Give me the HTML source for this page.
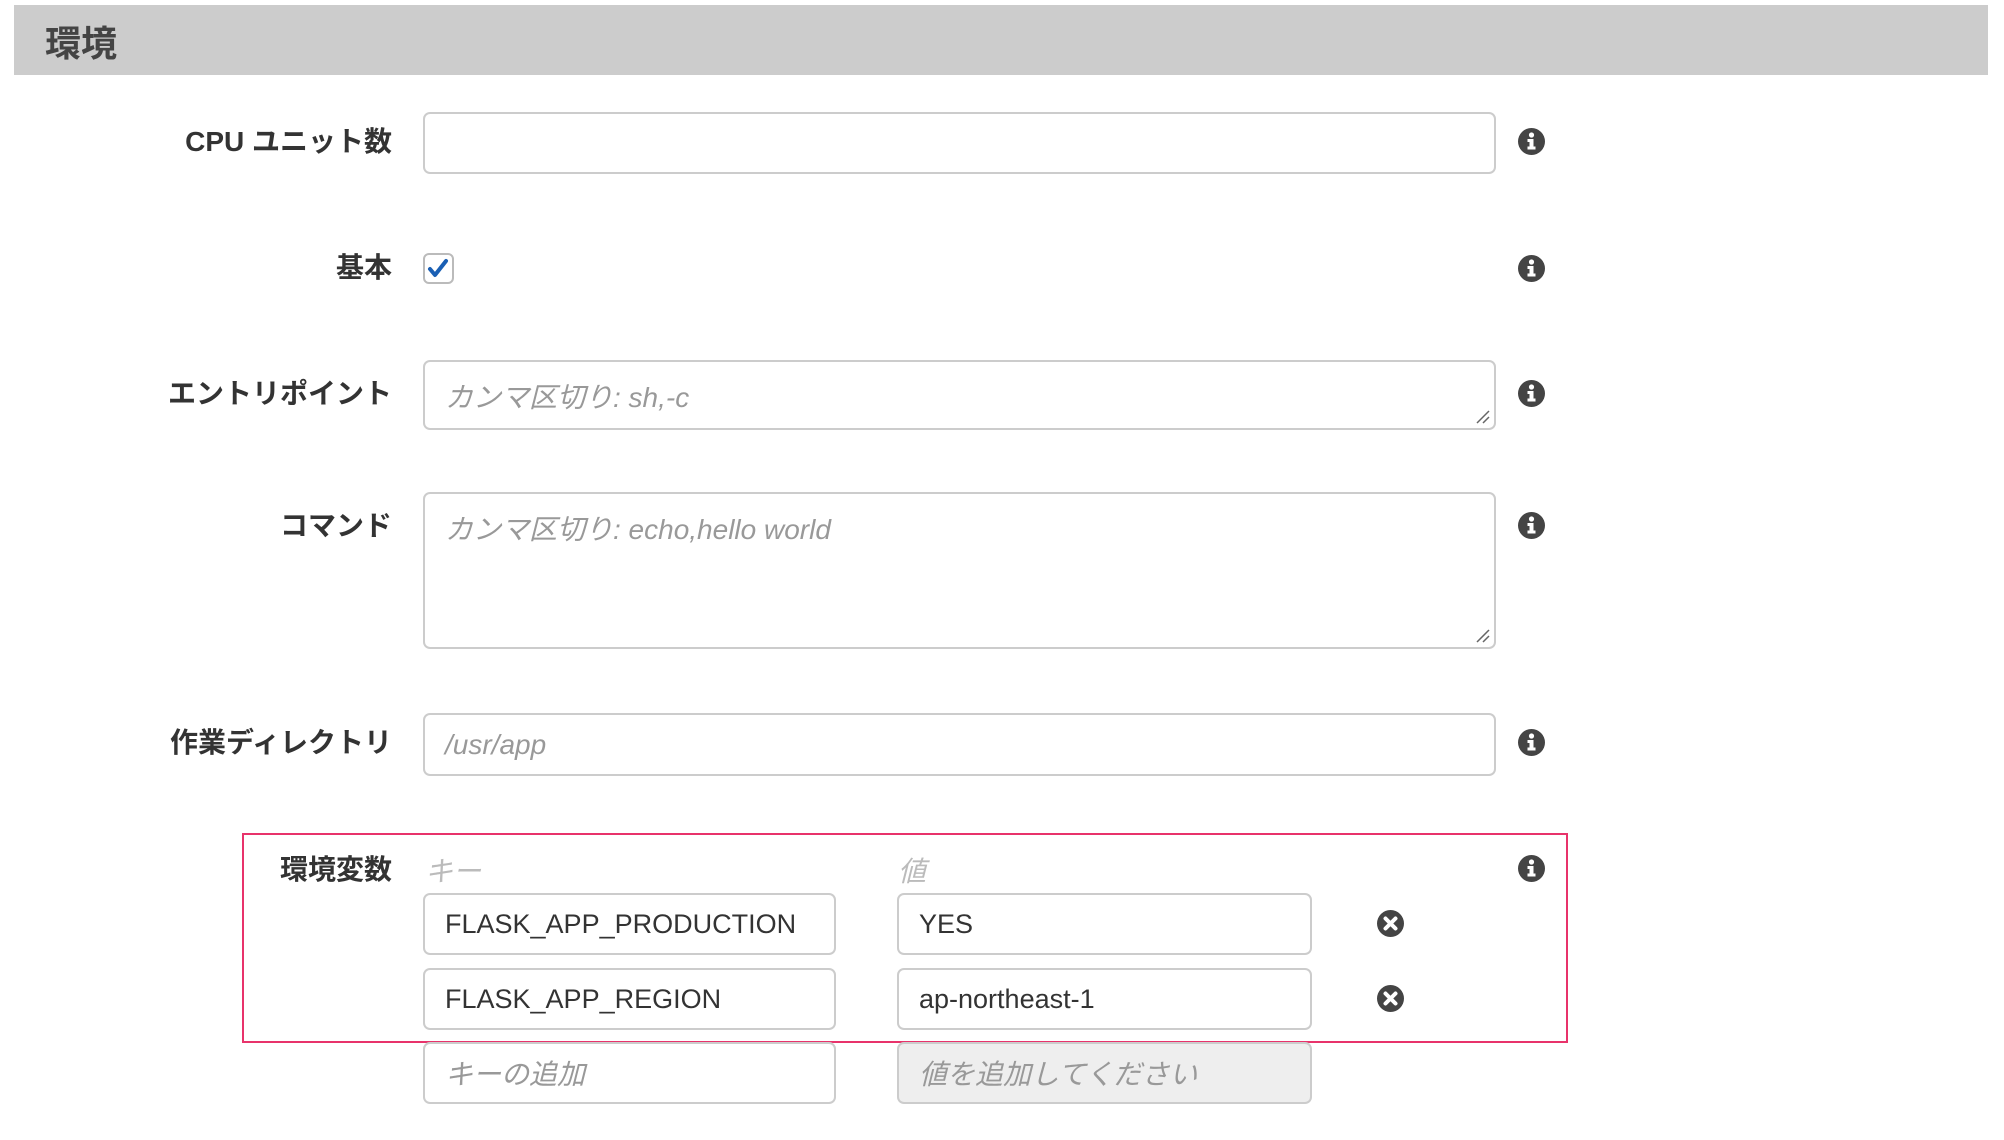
<!DOCTYPE html>
<html><head><meta charset="utf-8"><style>
body{margin:0;width:2004px;height:1140px;background:#fff;position:relative;overflow:hidden;font-family:"Liberation Sans","Noto Sans CJK JP",sans-serif;}
.a{position:absolute}
.hdr{left:14px;top:5px;width:1974px;height:70px;background:#cccccc}
.hdr span{position:absolute;left:31px;top:10px;font-size:36px;font-weight:bold;color:#444}
.lbl{position:absolute;right:1612px;font-size:28px;font-weight:bold;color:#333;white-space:nowrap;line-height:30px}
.inp{position:absolute;border:2px solid #ccc;border-radius:7px;box-sizing:border-box;background:#fff;font-size:27px;color:#333;padding-left:20px;display:flex;align-items:center}
.ph{color:#999;font-style:italic;font-size:28px}
.ta{align-items:flex-start}
.info{position:absolute;width:27px;height:27px}
.grip{position:absolute;right:4px;bottom:4px;width:14px;height:14px}
</style></head><body>
<div class="a hdr"><span>環境</span></div>

<div class="lbl" style="top:127px">CPU ユニット数</div>
<div class="inp" style="left:423px;top:112px;width:1073px;height:62px"></div>

<div class="lbl" style="top:253px">基本</div>
<div class="a" style="left:423px;top:253px;width:31px;height:31px;border:2px solid #bbb;border-radius:6px;box-sizing:border-box;background:#fff">
<svg width="27" height="27" viewBox="0 0 27 27" style="position:absolute;left:0;top:0"><path d="M5 14 L10 20 L21 6" stroke="#1a5fb4" stroke-width="4" fill="none" stroke-linecap="round" stroke-linejoin="round"/></svg></div>

<div class="lbl" style="top:379px">エントリポイント</div>
<div class="inp ta" style="left:423px;top:360px;width:1073px;height:70px;padding-top:14px"><span class="ph">カンマ区切り: sh,-c</span>
<svg class="grip" viewBox="0 0 14 14"><path d="M1 13 L13 1 M7 13 L13 7" stroke="#666" stroke-width="1.5"/></svg></div>

<div class="lbl" style="top:511px">コマンド</div>
<div class="inp ta" style="left:423px;top:492px;width:1073px;height:157px;padding-top:14px"><span class="ph">カンマ区切り: echo,hello world</span>
<svg class="grip" viewBox="0 0 14 14"><path d="M1 13 L13 1 M7 13 L13 7" stroke="#666" stroke-width="1.5"/></svg></div>

<div class="lbl" style="top:728px">作業ディレクトリ</div>
<div class="inp" style="left:423px;top:713px;width:1073px;height:63px"><span class="ph">/usr/app</span></div>

<div class="a" style="left:242px;top:833px;width:1326px;height:210px;border:2px solid #e8336b;box-sizing:border-box"></div>
<div class="lbl" style="top:855px">環境変数</div>
<div class="a ph" style="left:425px;top:850px;color:#bbb">キー</div>
<div class="a ph" style="left:898px;top:850px;color:#bbb">値</div>

<div class="inp" style="left:423px;top:893px;width:413px;height:62px">FLASK_APP_PRODUCTION</div>
<div class="inp" style="left:897px;top:893px;width:415px;height:62px">YES</div>
<div class="inp" style="left:423px;top:968px;width:413px;height:62px">FLASK_APP_REGION</div>
<div class="inp" style="left:897px;top:968px;width:415px;height:62px">ap-northeast-1</div>
<div class="inp" style="left:423px;top:1042px;width:413px;height:62px"><span class="ph">キーの追加</span></div>
<div class="inp" style="left:897px;top:1042px;width:415px;height:62px;background:#eee"><span class="ph">値を追加してください</span></div>

<svg width="0" height="0" style="position:absolute"><defs>
<g id="i"><circle cx="13.5" cy="13.5" r="13.5" fill="#444"/><circle cx="13.5" cy="7" r="2.6" fill="#fff"/><path d="M9.5 11 H15.5 V18.5 H17.5 V21.5 H9.5 V18.5 H11.5 V14 H9.5 Z" fill="#fff"/></g>
<g id="x"><circle cx="13.5" cy="13.5" r="13.5" fill="#444"/><path d="M8.5 8.5 L18.5 18.5 M18.5 8.5 L8.5 18.5" stroke="#fff" stroke-width="4" stroke-linecap="round"/></g>
</defs></svg>
<svg class="info" style="left:1518px;top:128px" viewBox="0 0 27 27"><use href="#i"/></svg>
<svg class="info" style="left:1518px;top:255px" viewBox="0 0 27 27"><use href="#i"/></svg>
<svg class="info" style="left:1518px;top:380px" viewBox="0 0 27 27"><use href="#i"/></svg>
<svg class="info" style="left:1518px;top:512px" viewBox="0 0 27 27"><use href="#i"/></svg>
<svg class="info" style="left:1518px;top:729px" viewBox="0 0 27 27"><use href="#i"/></svg>
<svg class="info" style="left:1518px;top:855px" viewBox="0 0 27 27"><use href="#i"/></svg>
<svg class="info" style="left:1377px;top:910px" viewBox="0 0 27 27"><use href="#x"/></svg>
<svg class="info" style="left:1377px;top:985px" viewBox="0 0 27 27"><use href="#x"/></svg>
</body></html>
